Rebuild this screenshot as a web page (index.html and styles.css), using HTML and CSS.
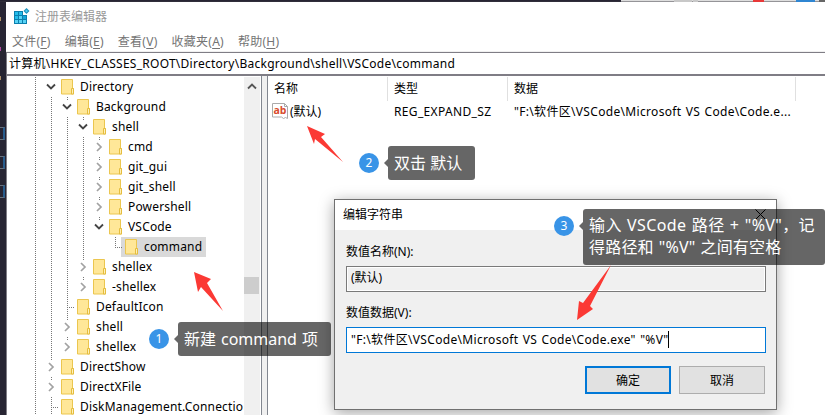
FILE: index.html
```html
<!DOCTYPE html>
<html lang="zh-CN">
<head>
<meta charset="utf-8">
<title>注册表编辑器</title>
<link rel="stylesheet" href="styles.css">
</head>
<body>
<svg class="defs" width="0" height="0">
  <symbol id="folder" viewBox="0 0 13 17"><path d="M.5 1.5h11v9h1v5.5H.5z" fill="#ffe798" stroke="#ebc64f"/><path d="M10.5 16v-5.5h2V16z" fill="#fff0b8" stroke="#e5bd3e"/></symbol>
  <symbol id="open" viewBox="0 0 10 8"><path d="M1 1.5 5 5.5 9 1.5" fill="none" stroke="#444" stroke-width="1.8"/></symbol>
  <symbol id="closed" viewBox="0 0 8 10"><path d="M2 1 6 5 2 9" fill="none" stroke="#a2a2a2" stroke-width="1.7"/></symbol>
</svg>
<div class="desktop">
  <div class="backdrop-top"><i class="tab"></i><i class="red"></i><i class="blue"></i><i class="edge"></i></div>
  <div class="screen">
    <div class="backdrop-left"><i class="b1"></i><i class="b2"></i><i class="b3"></i><i class="br b4"></i><i class="br b5"></i><i class="br b6"></i></div>
    <div class="window">
      <header class="title">
        <svg width="16" height="17" viewBox="0 0 16 17"><path d="M0 3h9v4h4v9H0z" fill="#0b7fae"/><path d="M1 4h3v3H1zM5 4h3v3H5zM1 8h3v3H1z" fill="#25bdea"/><path d="M5 8h3v3H5zM1 12h3v3H1zM5 12h3v3H5zM9 12h3v3H9z" fill="#58d3f5"/><path d="M9 8h3v3H9z" fill="#16a6d8"/><path d="m12.500 0 3 3-3 3-3-3z" fill="#1b91bd"/><path d="m12.500 1.500 1.500 1.500-1.500 1.500L11 3z" fill="#50c8ee"/></svg>
        <span>注册表编辑器</span>
      </header>
      <nav class="menu"><span>文件(<u>F</u>)</span><span>编辑(<u>E</u>)</span><span>查看(<u>V</u>)</span><span>收藏夹(<u>A</u>)</span><span>帮助(<u>H</u>)</span></nav>
      <div class="address"><span>计算机\HKEY_CLASSES_ROOT\Directory\Background\shell\VSCode\command</span></div>
      <main class="panes">
        <div class="tree">
          <div class="row"><i class="v"></i><i class="x"><svg class="o"><use href="#open"/></svg></i><span class="node"><svg class="f"><use href="#folder"/></svg><b>Directory</b></span></div>
          <div class="row"><i class="v"></i><i class="v"></i><i class="x c"><svg class="o"><use href="#open"/></svg></i><span class="node"><svg class="f"><use href="#folder"/></svg><b>Background</b></span></div>
          <div class="row"><i class="v"></i><i class="v"></i><i class="v"></i><i class="x c"><svg class="o"><use href="#open"/></svg></i><span class="node"><svg class="f"><use href="#folder"/></svg><b>shell</b></span></div>
          <div class="row"><i class="v"></i><i class="v"></i><i class="v"></i><i class="v"></i><i class="x c"><svg class="s"><use href="#closed"/></svg></i><span class="node"><svg class="f"><use href="#folder"/></svg><b>cmd</b></span></div>
          <div class="row"><i class="v"></i><i class="v"></i><i class="v"></i><i class="v"></i><i class="x c"><svg class="s"><use href="#closed"/></svg></i><span class="node"><svg class="f"><use href="#folder"/></svg><b>git_gui</b></span></div>
          <div class="row"><i class="v"></i><i class="v"></i><i class="v"></i><i class="v"></i><i class="x c"><svg class="s"><use href="#closed"/></svg></i><span class="node"><svg class="f"><use href="#folder"/></svg><b>git_shell</b></span></div>
          <div class="row"><i class="v"></i><i class="v"></i><i class="v"></i><i class="v"></i><i class="x c"><svg class="s"><use href="#closed"/></svg></i><span class="node"><svg class="f"><use href="#folder"/></svg><b>Powershell</b></span></div>
          <div class="row"><i class="v"></i><i class="v"></i><i class="v"></i><i class="v"></i><i class="x c"><svg class="o"><use href="#open"/></svg></i><span class="node"><svg class="f"><use href="#folder"/></svg><b>VSCode</b></span></div>
          <div class="row"><i class="v"></i><i class="v"></i><i class="v"></i><i class="v"></i><i></i><i class="l"></i><span class="node selected"><svg class="f"><use href="#folder"/></svg><b>command</b></span></div>
          <div class="row"><i class="v"></i><i class="v"></i><i class="v"></i><i class="x c"><svg class="s"><use href="#closed"/></svg></i><span class="node"><svg class="f"><use href="#folder"/></svg><b>shellex</b></span></div>
          <div class="row"><i class="v"></i><i class="v"></i><i class="v"></i><i class="x c"><svg class="s"><use href="#closed"/></svg></i><span class="node"><svg class="f"><use href="#folder"/></svg><b>-shellex</b></span></div>
          <div class="row"><i class="v"></i><i class="v"></i><i class="v t"></i><span class="node"><svg class="f"><use href="#folder"/></svg><b>DefaultIcon</b></span></div>
          <div class="row"><i class="v"></i><i class="v"></i><i class="x c"><svg class="s"><use href="#closed"/></svg></i><span class="node"><svg class="f"><use href="#folder"/></svg><b>shell</b></span></div>
          <div class="row"><i class="v"></i><i class="v"></i><i class="x c"><svg class="s"><use href="#closed"/></svg></i><span class="node"><svg class="f"><use href="#folder"/></svg><b>shellex</b></span></div>
          <div class="row"><i class="v"></i><i class="x c"><svg class="s"><use href="#closed"/></svg></i><span class="node"><svg class="f"><use href="#folder"/></svg><b>DirectShow</b></span></div>
          <div class="row"><i class="v"></i><i class="x c"><svg class="s"><use href="#closed"/></svg></i><span class="node"><svg class="f"><use href="#folder"/></svg><b>DirectXFile</b></span></div>
          <div class="row"><i class="v"></i><i class="v t"></i><span class="node"><svg class="f"><use href="#folder"/></svg><b>DiskManagement.Connectio</b></span></div>
        </div>
        <div class="scroll"><svg width="10" height="8" viewBox="0 0 10 8"><path d="M1 6.500 5 2.500 9 6.500" fill="none" stroke="#555" stroke-width="1.800"/></svg><div class="thumb"></div></div>
        <div class="splitter"></div>
        <div class="list">
          <div class="cols head"><span>名称</span><span>类型</span><span>数据</span></div>
          <div class="cols item"><span><svg width="16" height="16" viewBox="0 0 16 16"><path d="M.5.500h12l3 3v12l-2-1-2 1-2-1.500H.5z" fill="#fff" stroke="#aaa"/><path d="M12.500.500v3h3" fill="none" stroke="#aaa"/><text class="ab" x="1.500" y="10.500">ab</text></svg>(默认)</span><span class="type">REG_EXPAND_SZ</span><span class="data">"F:\软件区\VSCode\Microsoft VS Code\Code.e...</span></div>
        </div>
      </main>
    </div>
  </div>

  <section class="dialog">
    <header><span>编辑字符串</span><svg width="11" height="11" viewBox="0 0 11 11"><path d="m.5.500 10 10m0-10-10 10" stroke="#000" fill="none"/></svg></header>
    <div class="form">
      <label class="l1">数值名称(N):</label>
      <div class="field off">(默认)</div>
      <label class="l2">数值数据(V):</label>
      <div class="field on"><span class="data">"F:\软件区\VSCode\Microsoft VS Code\Code.exe" "%V"</span><i></i></div>
      <div class="buttons"><button class="ok">确定</button><button>取消</button></div>
    </div>
  </section>

  <svg class="arrows" width="825" height="415" viewBox="0 0 825 415" fill="#fb3934"><path d="m194 272 17 7-4 4 16 28-22-24-3 5z"/><path d="m307 126 18 8-4 3 22 25-28-23-1 5z"/><path d="m611 265-21 41 3 3-16 11 2-19 4 2z"/></svg>
  <div class="note n1"><em>1</em><p>新建 command 项</p></div>
  <div class="note n2"><em>2</em><p>双击 默认</p></div>
  <div class="note n3"><em>3</em><p><span class="first">输入 VSCode 路径 + "%V"，记</span><br><span class="second">得路径和 "%V" 之间有空格</span></p></div>
</div>
</body>
</html>
```
FILE: styles.css
```css
* { box-sizing: border-box; }
body { margin: 0; overflow: hidden; font: 12px/20px "Noto Sans", "Noto Sans CJK SC", sans-serif; color: #000; }
svg { display: block; flex: none; }
i, em, b { font-style: normal; font-weight: 400; }
.defs { position: absolute; }
.desktop { position: relative; width: 825px; height: 415px; overflow: hidden; background: #fff; }

.backdrop-top { display: flex; height: 2px; padding-left: 621px; background: linear-gradient(90deg, #272533 621px, #dedede 621px); border-bottom: 1px solid rgba(60,58,66,.45); }
.backdrop-top i { height: 2px; }
.backdrop-top .tab { width: 24px; margin-left: 53px; border: solid #c8c8c8; border-width: 0 5px 0 18px; }
.backdrop-top .red { width: 12px; margin-left: 55px; background: #e83838; }
.backdrop-top .blue { width: 20px; margin-left: 32px; background: #2f86d2; }
.backdrop-top .edge { width: 6px; margin-left: 4px; background: #666; }
.screen { display: flex; height: 413px; }
.backdrop-left { width: 6px; background: #272533; flex: none; padding-top: 15px; }
.backdrop-left i { display: block; width: 1px; height: 4px; }
.b1 { background: #b09068; }
.backdrop-left .b2 { background: #b045a0; margin-top: 26px; }
.backdrop-left .b3 { background: #b09068; margin-top: 25px; }
.backdrop-left .br { width: 5px; height: 13px; border: 1px solid #68727c; border-left: 0; border-right: 2px solid #285c8c; }
.backdrop-left .b4 { margin-top: 47px; }
.backdrop-left .b5 { margin-top: 16px; }
.backdrop-left .b6 { margin-top: 16px; }

.window { flex: 1; min-width: 0; display: flex; flex-direction: column; }
.title { display: flex; height: 30px; padding: 6px 0 0 8px; gap: 5px; color: #999; }
.title span { line-height: 18px; }
.menu { display: flex; height: 20px; padding-left: 6px; color: #747474; letter-spacing: .25px; }
.menu span { margin-right: 14px; white-space: nowrap; }
.menu u { text-underline-offset: 2px; }
.address { height: 24px; border: solid #7f7d85; border-width: 1px 0 2px 1px; padding: 1px 0 0 2px; box-shadow: 0 -1px #f0f0f0; }
.address span { letter-spacing: .26px; white-space: nowrap; }
.panes { flex: 1; display: flex; min-height: 0; border-left: 1px solid #7f7d85; }
.tree { width: 237px; padding: 1px 0 0 20px; overflow: hidden; letter-spacing: .17px; }
.row { display: flex; height: 20px; }
.row > i { position: relative; width: 16px; flex: none; }
.v, .c { background: repeating-linear-gradient(180deg, #777 0 1px, transparent 1px 2px) 8px 0 / 1px 100% no-repeat; }
.row > .c { background-size: 1px 3px; }
.v.t { background: repeating-linear-gradient(180deg, #777 0 1px, transparent 1px 2px) 8px 0 / 1px 100% no-repeat, repeating-linear-gradient(90deg, #777 0 1px, transparent 1px 2px) 8px 10px / 8px 1px no-repeat; }
.l { background: repeating-linear-gradient(180deg, #777 0 1px, transparent 1px 2px) 8px 0 / 1px 11px no-repeat, repeating-linear-gradient(90deg, #777 0 1px, transparent 1px 2px) 8px 10px / 8px 1px no-repeat; }
.x { display: flex; align-items: center; justify-content: center; }
.o { width: 10px; height: 8px; }
.s { width: 8px; height: 10px; }
.f { width: 13px; height: 17px; }
.node { display: flex; gap: 6px; margin-left: -2px; padding: 1px 4px; }
.node b { line-height: 18px; white-space: nowrap; }
.selected { background: #d9d9d9; }
.scroll { width: 16px; background: #f0f0f0; margin-top: 1px; padding: 5px 0 0 3px; }
.thumb { width: 15px; height: 17px; margin: 187px 0 0 -3px; background: #cdcdcd; }
.splitter { width: 7px; margin-left: 1px; background: #f0f0f0; border: solid #828790; border-width: 0 1px; }
.list { flex: 1; padding-top: 1px; }
.cols { display: grid; grid-template-columns: 120px 120px 288px; }
.cols span { white-space: nowrap; }
.head { height: 24px; }
.head span { border-right: 1px solid #e0e0e0; padding-left: 6px; line-height: 23px; }
.item { padding-top: 1px; }
.item > span { display: flex; padding-left: 6px; }
.item > span:first-child { padding-left: 4px; gap: 2px; }
.item svg { margin-top: 1px; }
.type { letter-spacing: .35px; }
.data { letter-spacing: .32px; word-spacing: .9px; }
.ab { font: bold 10.5px "Open Sans", sans-serif; fill: #d84b2c; }

.dialog { position: absolute; left: 334px; top: 199px; width: 443px; height: 211px; background: #f0f0f0; border: 1px solid #707070; box-shadow: 0 3px 14px rgba(0,0,0,.36); }
.dialog header { display: flex; justify-content: space-between; height: 30px; padding: 5px 10px 0 8px; background: #fff; }
.dialog header svg { margin-top: 4px; }
.form { padding: 12px 10px 0 11px; display: flex; flex-direction: column; }
.field { display: flex; height: 26px; border: 1px solid #7a7a7a; padding: 1px 4px; margin-top: 4px; box-shadow: inset 0 0 0 1px #fff; }
.on { padding-top: 2px; border-color: #0078d7; background: #fff; }
.on i { width: 1px; height: 17px; margin: 1px 0 0; background: #000; }
.l2 { margin-top: 11px; }
.buttons { display: flex; justify-content: flex-end; gap: 8px; margin: 13px 1px 0 0; }
button { width: 86px; height: 28px; padding: 2px 0 0; border: 1px solid #adadad; background: #e1e1e1; color: #000; font: inherit; }
.ok { border: 2px solid #0078d7; }

.arrows { position: absolute; left: 0; top: 0; }
.note { position: absolute; display: flex; gap: 9px; color: #fff; }
.note em { width: 20px; height: 20px; border-radius: 50%; background: #3994e7; font-size: 12px; line-height: 19px; text-align: center; margin-top: 7px; flex: none; }
.note p { position: relative; margin: 0; height: 34px; padding: 5px 6px; border-radius: 3px; background: rgba(0,0,0,.6); font-size: 16px; line-height: 24px; white-space: nowrap; }
.note p::before { content: ""; position: absolute; left: -4px; top: 13px; border: solid transparent; border-width: 4px 4px 4px 0; border-right-color: rgba(0,0,0,.6); }
.n1 { left: 149px; top: 322px; }
.n1 p { width: 153px; word-spacing: .8px; }
.n2 { left: 359px; top: 146px; }
.n2 p { width: 87px; }
.n3 { left: 554px; top: 209px; }
.n3 p { width: 242px; height: 56px; line-height: 22px; }
.first { letter-spacing: .38px; word-spacing: .8px; }
.second { letter-spacing: .2px; word-spacing: .6px; }
```
